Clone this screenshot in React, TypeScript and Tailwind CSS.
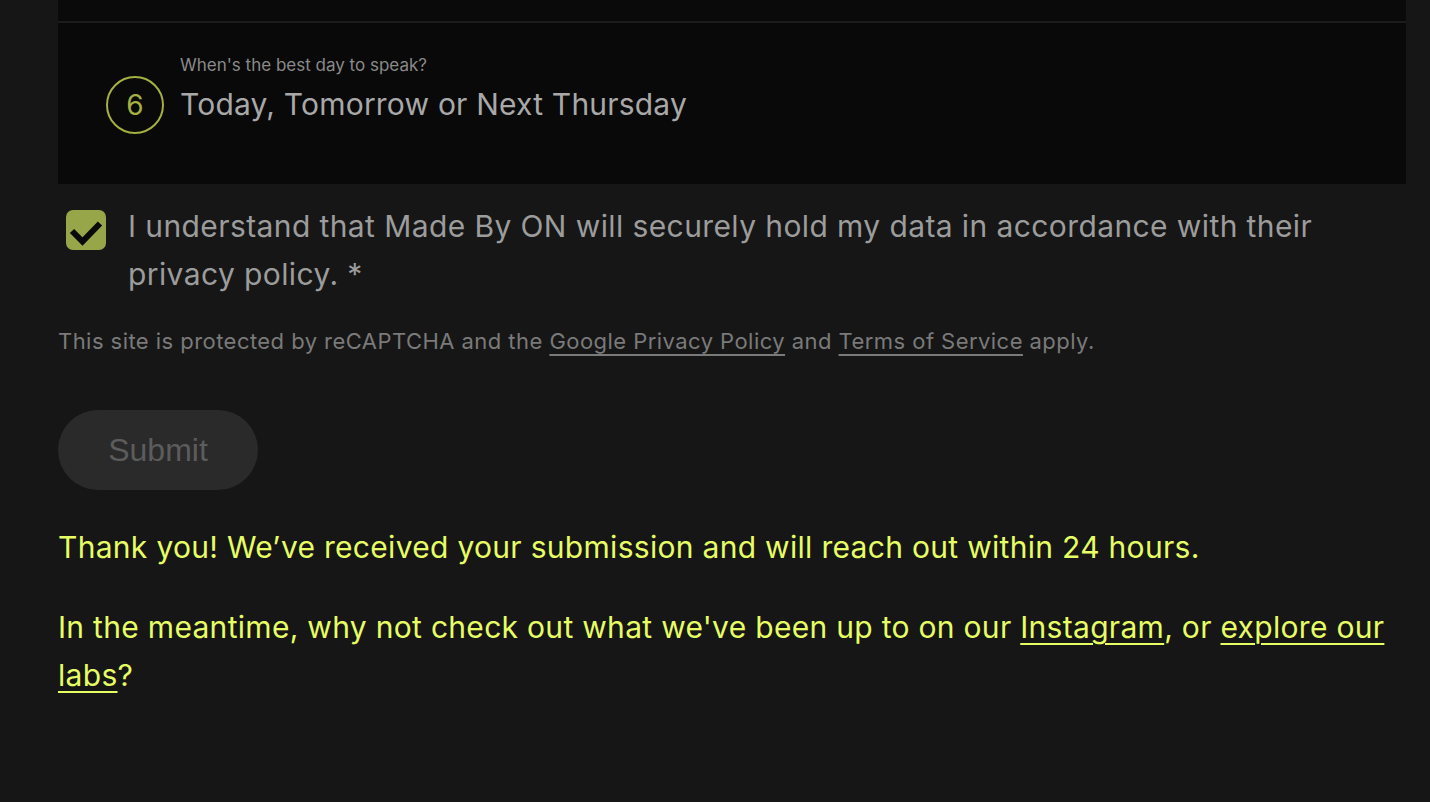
import React from "react";

const App = () => {
  return (
    <div className="min-h-[802px] w-full bg-[#161616] font-['Inter',sans-serif]">
      <div className="mx-[58px] w-[1348px]">
        <div className="h-[21px] bg-[#0a0a0a]" />
        <div className="h-[2px] bg-[#1c1c1c]" />
        <div className="flex h-[161px] items-center gap-[16px] bg-[#090909] pl-[48px]">
          <div className="mt-[2px] flex h-[58px] w-[58px] items-center justify-center rounded-full border-2 border-[#a4b040] text-[28px] text-[#a4b040]">
            6
          </div>
          <div className="-mt-[31px] flex flex-col">
            <span className="text-[17px] leading-[24px] text-[#8a8a8a]">When's the best day to speak?</span>
            <span className="mt-[7px] text-[30px] leading-[40px] tracking-[0.2px] text-[#a8a8a8]">
              Today, Tomorrow or Next Thursday
            </span>
          </div>
        </div>

        <label className="mt-[25px] flex items-start gap-[22px] pl-[8px]">
          <span className="mt-[1px] flex h-[40px] w-[40px] shrink-0 items-center justify-center rounded-[7px] bg-[#98a64a]">
            <svg width="40" height="40" viewBox="0 0 40 40" fill="none">
              <path d="M6 21l10.5 10.5L34 13.5" stroke="#0a0a0a" strokeWidth="6" strokeLinejoin="miter" />
            </svg>
          </span>
          <span className="-mt-[7px] max-w-[1200px] text-[30px] leading-[48px] tracking-[0.4px] text-[#9c9c9c]">
            I understand that Made By ON will securely hold my data in accordance with their privacy policy. *
          </span>
        </label>

        <p className="mt-[27px] text-[22px] leading-[32px] tracking-[0.45px] text-[#7a7a7a]">
          This site is protected by reCAPTCHA and the{" "}
          <a className="underline underline-offset-[5px]">Google Privacy Policy</a> and{" "}
          <a className="underline underline-offset-[5px]">Terms of Service</a> apply.
        </p>

        <button className="mt-[53px] flex h-[80px] w-[200px] items-center justify-center rounded-full bg-[#2a2a2a] font-['Liberation_Sans',sans-serif] text-[32px] text-[#5c5c5c]">
          Submit
        </button>

        <div className="mt-[33px] text-[30px] leading-[48px] tracking-[0.3px] text-[#e6fd64]">
          <p>Thank you! We’ve received your submission and will reach out within 24 hours.</p>
          <p className="mt-[32px]">
            In the meantime, why not check out what we've been up to on our{" "}
            <a className="underline decoration-2 underline-offset-[5px]">Instagram</a>, or{" "}
            <a className="underline decoration-2 underline-offset-[5px]">explore our labs</a>?
          </p>
        </div>
      </div>
    </div>
  );
};

export default App;
